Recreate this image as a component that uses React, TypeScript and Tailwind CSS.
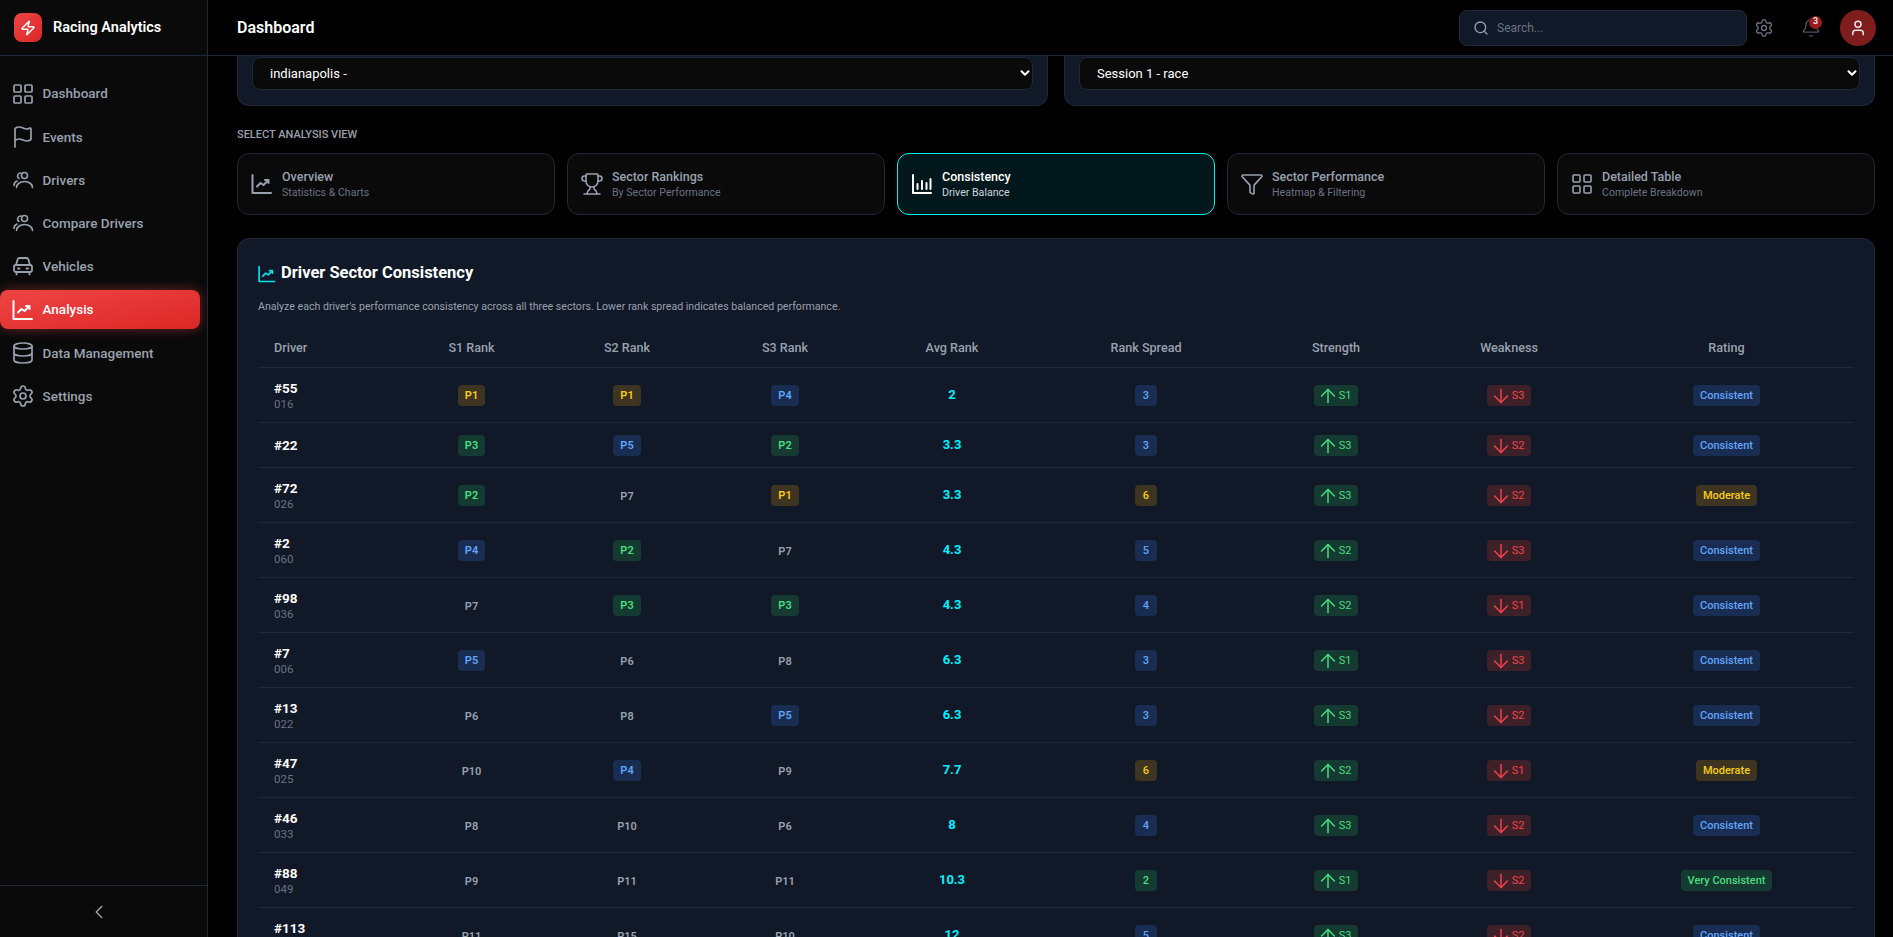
import React from "react";
import {
  LayoutGrid, Flag, Database, Settings, ChevronLeft, ChevronDown, Search, Bell, User, Zap,
  Trophy, Funnel, ArrowUp, ArrowDown,
} from "lucide-react";

type IconP = { size?: number; className?: string; strokeWidth?: number };

function ChartIcon({ size = 24, className }: IconP) {
  return (
    <svg width={size} height={size} viewBox="0 0 24 24" fill="none" stroke="currentColor" strokeWidth="2" strokeLinecap="round" strokeLinejoin="round" className={className}>
      <path d="M2.5 3v18h18.5" />
      <path d="M7 14.5l3.5-3.5 3 2 4.5-4.5" />
      <path d="M15 8h3.5v3" />
    </svg>
  );
}

function BarsIcon({ size = 24, className }: IconP) {
  return (
    <svg width={size} height={size} viewBox="0 0 24 24" fill="none" stroke="currentColor" strokeWidth="2" strokeLinecap="round" strokeLinejoin="round" className={className}>
      <path d="M3 3v18h18" />
      <path d="M7.5 17v-5" />
      <path d="M12 17V9" />
      <path d="M16.5 17v-6" />
      <path d="M20.5 17V7" />
    </svg>
  );
}

function UsersIcon({ size = 24, className }: IconP) {
  return (
    <svg width={size} height={size} viewBox="0 0 24 24" fill="none" stroke="currentColor" strokeWidth="1.6" strokeLinecap="round" strokeLinejoin="round" className={className}>
      <circle cx="13.5" cy="7.5" r="3" />
      <path d="M5.5 19.5a8 6 0 0 1 16 0" />
      <path d="M10 5A3 3 0 0 0 8 10.5" />
      <path d="M6 13c-1.8.7-3 2.3-3 4.5" />
    </svg>
  );
}

function CarIcon({ size = 24, className }: IconP) {
  return (
    <svg width={size} height={size} viewBox="0 0 24 24" fill="none" stroke="currentColor" strokeWidth="1.8" strokeLinecap="round" strokeLinejoin="round" className={className}>
      <path d="M5 11l1.6-5.4A2.2 2.2 0 0 1 8.7 4h6.6a2.2 2.2 0 0 1 2.1 1.6L19 11" />
      <rect x="3" y="11" width="18" height="7" rx="2" />
      <path d="M7 14.5h1.5" />
      <path d="M15.5 14.5H17" />
      <path d="M5.5 18v2.5" />
      <path d="M18.5 18v2.5" />
    </svg>
  );
}

const nav = [
  { label: "Dashboard", Icon: LayoutGrid },
  { label: "Events", Icon: Flag },
  { label: "Drivers", Icon: UsersIcon },
  { label: "Compare Drivers", Icon: UsersIcon },
  { label: "Vehicles", Icon: CarIcon },
  { label: "Analysis", Icon: ChartIcon, active: true },
  { label: "Data Management", Icon: Database },
  { label: "Settings", Icon: Settings },
];

const views = [
  { title: "Overview", sub: "Statistics & Charts", Icon: ChartIcon },
  { title: "Sector Rankings", sub: "By Sector Performance", Icon: Trophy },
  { title: "Consistency", sub: "Driver Balance", Icon: BarsIcon, active: true },
  { title: "Sector Performance", sub: "Heatmap & Filtering", Icon: Funnel },
  { title: "Detailed Table", sub: "Complete Breakdown", Icon: LayoutGrid },
];

type Row = { n: string; c?: string; s: [number, number, number]; avg: string; spread: number; up: string; down: string; rating: string };

const rows: Row[] = [
  { n: "#55", c: "016", s: [1, 1, 4], avg: "2", spread: 3, up: "S1", down: "S3", rating: "Consistent" },
  { n: "#22", s: [3, 5, 2], avg: "3.3", spread: 3, up: "S3", down: "S2", rating: "Consistent" },
  { n: "#72", c: "026", s: [2, 7, 1], avg: "3.3", spread: 6, up: "S3", down: "S2", rating: "Moderate" },
  { n: "#2", c: "060", s: [4, 2, 7], avg: "4.3", spread: 5, up: "S2", down: "S3", rating: "Consistent" },
  { n: "#98", c: "036", s: [7, 3, 3], avg: "4.3", spread: 4, up: "S2", down: "S1", rating: "Consistent" },
  { n: "#7", c: "006", s: [5, 6, 8], avg: "6.3", spread: 3, up: "S1", down: "S3", rating: "Consistent" },
  { n: "#13", c: "022", s: [6, 8, 5], avg: "6.3", spread: 3, up: "S3", down: "S2", rating: "Consistent" },
  { n: "#47", c: "025", s: [10, 4, 9], avg: "7.7", spread: 6, up: "S2", down: "S1", rating: "Moderate" },
  { n: "#46", c: "033", s: [8, 10, 6], avg: "8", spread: 4, up: "S3", down: "S2", rating: "Consistent" },
  { n: "#88", c: "049", s: [9, 11, 11], avg: "10.3", spread: 2, up: "S1", down: "S2", rating: "Very Consistent" },
  { n: "#113", c: "041", s: [11, 15, 10], avg: "12", spread: 5, up: "S3", down: "S2", rating: "Consistent" },
];

const tones = {
  yellow: "bg-[#3d3522] text-[#facc15]",
  green: "bg-[#143a31] text-[#4ade80]",
  blue: "bg-[#192d52] text-[#60a5fa]",
  red: "bg-[#3e2029] text-[#f1444c]",
};

function Pill({ tone, className, children }: { tone: keyof typeof tones; className?: string; children: React.ReactNode }) {
  return (
    <span className={`inline-flex h-[21px] items-center rounded text-[11px] align-middle ${tones[tone]} ${className ?? ""}`}>
      {children}
    </span>
  );
}

function Rank({ p }: { p: number }) {
  const label = `P${p}`;
  if (p === 1) return <Pill tone="yellow" className="px-[7px] font-semibold">{label}</Pill>;
  if (p <= 3) return <Pill tone="green" className="px-[7px] font-semibold">{label}</Pill>;
  if (p <= 5) return <Pill tone="blue" className="px-[7px] font-semibold">{label}</Pill>;
  return <span className="text-[11px] font-semibold text-gray-400">{label}</span>;
}

function Rating({ r }: { r: string }) {
  const tone = r === "Moderate" ? "yellow" : r === "Very Consistent" ? "green" : "blue";
  return <Pill tone={tone} className="px-[7px] font-medium">{r}</Pill>;
}

function SelectBox({ value }: { value: string }) {
  return (
    <div className="relative">
      <select
        defaultValue={value}
        className="block h-[33px] w-full appearance-none rounded-lg border border-[#1f2937] bg-[#0a0a0a] pl-[17px] text-[13px] text-white outline-none"
      >
        <option>{value}</option>
      </select>
      <ChevronDown size={14} strokeWidth={3.5} className="pointer-events-none absolute right-px top-[9px] text-white" />
    </div>
  );
}

export default function App() {
  return (
    <div className="flex h-screen overflow-hidden bg-black font-['Roboto',sans-serif] text-white">
      <aside className="flex h-full w-[208px] shrink-0 flex-col border-r border-[#1f2937] bg-[#0a0a0a]">
        <div className="flex h-[56px] shrink-0 items-center gap-[11px] border-b border-[#1f2937] pl-[14px]">
          <div className="flex h-[29px] w-7 items-center justify-center rounded-lg bg-gradient-to-br from-[#ef4444] to-[#dc2626]">
            <Zap size={16} strokeWidth={2.2} className="text-white" />
          </div>
          <span className="text-[14.5px] font-semibold text-white">Racing Analytics</span>
        </div>
        <nav className="flex flex-1 flex-col gap-1 pr-[7px] pt-[18px]">
          {nav.map(({ label, Icon, active }) => (
            <div
              key={label}
              className={`flex h-[39.2px] items-center gap-2 rounded-lg pl-[10.5px] text-[13.5px] font-medium ${
                active
                  ? "bg-gradient-to-br from-[#ef4444] to-[#dc2626] text-white shadow-[0_0_12px_rgba(239,68,68,0.45)]"
                  : "text-gray-400"
              }`}
            >
              <Icon size={24} className="shrink-0" strokeWidth={active ? 2 : 1.7} />
              <span>{label}</span>
            </div>
          ))}
        </nav>
        <div className="flex h-[52px] shrink-0 items-center justify-center border-t border-[#1f2937] pr-[10px]">
          <ChevronLeft size={22} strokeWidth={1.6} className="text-gray-400" />
        </div>
      </aside>

      <div className="flex min-w-0 flex-1 flex-col">
        <header className="flex h-[56px] shrink-0 items-center border-b border-[#1f2937] bg-black pl-[29px] pr-[17px]">
          <h1 className="text-base font-semibold text-white">Dashboard</h1>
          <div className="ml-auto flex h-9 w-[288px] items-center gap-2 rounded-lg border border-[#1f2937] bg-[#111827] pl-[13px]">
            <Search size={16} className="text-gray-400" />
            <span className="text-xs text-gray-500">Search...</span>
          </div>
          <Settings size={20} strokeWidth={1.6} className="ml-[7px] text-gray-500" />
          <div className="relative ml-[27px]">
            <Bell size={20} strokeWidth={1.6} className="text-gray-600" />
            <span className="absolute -right-px -top-[2px] flex h-[13px] w-[13px] items-center justify-center rounded-full bg-[#991b1b] text-[9px] font-semibold text-gray-200">
              3
            </span>
          </div>
          <div className="ml-[19px] flex h-9 w-9 items-center justify-center rounded-full bg-[#7f1d1d]">
            <User size={18} className="text-gray-200" />
          </div>
        </header>

        <main className="min-h-0 flex-1 overflow-hidden bg-black pl-[29px] pr-[18px]">
          <div className="grid grid-cols-2 gap-4">
            {["indianapolis -", "Session 1 - race"].map((v) => (
              <div key={v} className="rounded-b-xl border-x border-b border-[#1f2937] bg-[#111827] px-[14px] pb-[15px] pt-px">
                <SelectBox value={v} />
              </div>
            ))}
          </div>

          <div className="mb-[9px] mt-[21px] text-[11px] font-medium uppercase text-gray-400">
            Select Analysis View
          </div>

          <div className="grid grid-cols-5 gap-3">
            {views.map(({ title, sub, Icon, active }) => (
              <div
                key={title}
                className={`flex h-[62px] items-center gap-2 rounded-xl border px-3 ${
                  active ? "border-[#00f0f0] bg-[#03181c]" : "border-[#1f2937] bg-[#0a0a0a]"
                }`}
              >
                <Icon size={24} strokeWidth={1.6} className={active ? "shrink-0 text-white" : "shrink-0 text-gray-400"} />
                <div className="flex flex-col">
                  <span className={`text-[12.5px] font-medium leading-5 ${active ? "text-white" : "text-gray-400"}`}>{title}</span>
                  <span className={`-mt-[2px] text-[10.6px] leading-4 ${active ? "text-gray-300" : "text-gray-500"}`}>{sub}</span>
                </div>
              </div>
            ))}
          </div>

          <section className="mt-[23px] rounded-xl border border-[#1f2937] bg-[#111827] p-5">
            <h2 className="flex h-[30px] items-center gap-1 text-[16.5px] font-bold text-white">
              <ChartIcon size={20} className="-ml-px text-[#00e5f0]" />
              <span>Driver Sector Consistency</span>
            </h2>
            <p className="mt-[10px] text-[10.6px] leading-4 text-gray-400">
              Analyze each driver's performance consistency across all three sectors. Lower rank spread indicates balanced performance.
            </p>
            <table className="mt-[15px] w-full table-fixed">
              <thead>
                <tr className="h-[38px] border-b border-[#1f2937] text-[12.6px] font-medium text-gray-400">
                  <th className="w-[136px] pl-4 text-left font-medium">Driver</th>
                  <th className="w-[155px] font-medium">S1 Rank</th>
                  <th className="w-[156px] font-medium">S2 Rank</th>
                  <th className="w-[160px] font-medium">S3 Rank</th>
                  <th className="w-[174px] font-medium">Avg Rank</th>
                  <th className="w-[214px] font-medium">Rank Spread</th>
                  <th className="w-[166px] font-medium">Strength</th>
                  <th className="w-[180px] font-medium">Weakness</th>
                  <th className="font-medium">Rating</th>
                </tr>
              </thead>
              <tbody>
                {rows.map((r) => (
                  <tr key={r.n} className={`border-b border-[#1f2937] text-center ${r.c ? "h-[55px]" : "h-[45px]"}`}>
                    <td className="pl-4 text-left">
                      <div className="text-[13.5px] font-bold leading-5 text-white">{r.n}</div>
                      {r.c && <div className="-mt-[2px] text-[11.5px] leading-4 text-gray-500">{r.c}</div>}
                    </td>
                    {r.s.map((p, i) => (
                      <td key={i}><Rank p={p} /></td>
                    ))}
                    <td className="text-[13px] font-bold text-[#00f0ff]">{r.avg}</td>
                    <td>
                      <Pill tone={r.spread <= 2 ? "green" : r.spread >= 6 ? "yellow" : "blue"} className="px-2 font-medium">
                        {r.spread}
                      </Pill>
                    </td>
                    <td>
                      <Pill tone="green" className="pl-[3px] pr-[7px]">
                        <ArrowUp size={22} strokeWidth={1.6} />
                        {r.up}
                      </Pill>
                    </td>
                    <td>
                      <Pill tone="red" className="pl-[3px] pr-[7px]">
                        <ArrowDown size={22} strokeWidth={1.6} />
                        {r.down}
                      </Pill>
                    </td>
                    <td><Rating r={r.rating} /></td>
                  </tr>
                ))}
              </tbody>
            </table>
          </section>
        </main>
      </div>
    </div>
  );
}
